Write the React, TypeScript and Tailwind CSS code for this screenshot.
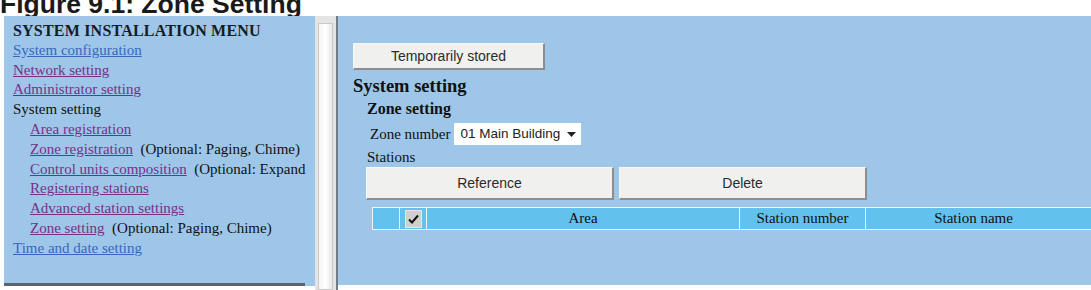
import React from "react";

const serif = "font-['Liberation_Serif','Times_New_Roman',serif]";
const sans = "font-['Liberation_Sans',Arial,sans-serif]";

function MenuLink({ children, fresh }: { children: React.ReactNode; fresh?: boolean }) {
  return (
    <a
      href="#"
      className={`underline ${fresh ? "text-[#3867c0] decoration-[#3867c0]" : "text-[#7a2f86] decoration-[#7a2f86]"}`}
    >
      {children}
    </a>
  );
}

function Btn({ label, className }: { label: string; className: string }) {
  return (
    <button
      className={`${sans} bg-[#f0f0ef] border-t border-l border-[#f7f7f7] border-r-2 border-b-2 border-r-[#8d8d8d] border-b-[#8d8d8d] text-[#2b2b2b] text-[14px] flex items-center justify-center ${className}`}
    >
      {label}
    </button>
  );
}

export default function App() {
  return (
    <div className="w-[1091px] h-[290px] bg-white overflow-hidden">
      <div className="h-[16px] flex">
        <h1 className={`${sans} font-bold text-[26.5px] leading-[26px] -mt-[9px] shrink-0 text-[#1a1a1a] whitespace-nowrap`}>
          Figure 9.1: Zone Setting
        </h1>
      </div>

      <div className="flex h-[274px] pl-[4px] items-start">
        {/* left menu frame */}
        <div className="w-[311px] h-[270px] bg-[#9ec6e9] overflow-hidden flex flex-col">
          <div className={`${serif} flex-1 text-[15px] leading-[19.8px] text-[#111] pl-[9px] pt-[5px] whitespace-nowrap`}>
            <div className="font-bold text-[16px] tracking-[0.2px] uppercase text-[#141c26]">System Installation Menu</div>
            <div><MenuLink fresh>System configuration</MenuLink></div>
            <div><MenuLink>Network setting</MenuLink></div>
            <div><MenuLink>Administrator setting</MenuLink></div>
            <div>System setting</div>
            <div className="pl-[17px] flex flex-col">
              <div><MenuLink>Area registration</MenuLink></div>
              <div><MenuLink>Zone registration</MenuLink>&nbsp;&nbsp;(Optional: Paging, Chime)</div>
              <div><MenuLink>Control units composition</MenuLink>&nbsp;&nbsp;(Optional: Expand</div>
              <div><MenuLink>Registering stations</MenuLink></div>
              <div><MenuLink>Advanced station settings</MenuLink></div>
              <div><MenuLink>Zone setting</MenuLink>&nbsp;&nbsp;(Optional: Paging, Chime)</div>
            </div>
            <div><MenuLink fresh>Time and date setting</MenuLink></div>
          </div>
          <div className="h-[3px] w-[301px] bg-[#5b646c]" />
        </div>

        {/* scrollbar */}
        <div className="w-[21px] h-[274px] bg-[#e4e4e4] flex justify-center">
          <div className="w-[15px] mt-[7px] h-[267px] bg-gradient-to-r from-[#f4f4f4] via-[#ffffff] to-[#e9e9e9] border border-[#c9c9c9]" />
        </div>
        <div className="w-[2px] h-[274px] bg-[#6f7c88]" />

        {/* right content frame */}
        <div className={`flex-1 h-[269px] bg-[#9ec6e9] pl-[15px] ${serif} text-[#111]`}>
          <Btn label="Temporarily stored" className="mt-[27px] w-[192px] h-[27px]" />
          <div className="font-bold text-[18.5px] leading-[20px] mt-[6px]">System setting</div>
          <div className="font-bold text-[16px] leading-[20px] mt-[3px] pl-[14px]">Zone setting</div>
          <div className="flex items-center gap-[4px] mt-[4px] pl-[17px] h-[22px]">
            <span className="text-[15px]">Zone number</span>
            <div className={`${sans} bg-white w-[127px] h-[22px] flex items-center justify-between pl-[6px] pr-[5px] text-[13.5px] text-[#222]`}>
              <span>01 Main Building</span>
              <svg width="9" height="5" viewBox="0 0 9 5">
                <path d="M0 0 H9 L4.5 5 Z" fill="#222" />
              </svg>
            </div>
          </div>
          <div className="text-[15px] leading-[19px] mt-[3px] pl-[14px]">Stations</div>
          <div className="flex gap-[5px] pl-[13px]">
            <Btn label="Reference" className="w-[248px] h-[33px]" />
            <Btn label="Delete" className="w-[248px] h-[33px]" />
          </div>
          <div className="ml-[19px] mt-[7px] flex h-[23px] border-y border-l border-[#eef6fb] bg-[#eef6fb] gap-[1px] text-[15px]">
            <div className="w-[26px] bg-[#62c2ed]" />
            <div className="w-[26px] bg-[#62c2ed] flex items-center justify-center">
              <div className="w-[17px] h-[18px] bg-[#cfcfcf] border border-[#e6e6e6] flex items-center justify-center">
                <svg width="11" height="10" viewBox="0 0 11 10">
                  <path d="M1 5.5 L4 8.5 L10 1.5" fill="none" stroke="#111" strokeWidth="2" />
                </svg>
              </div>
            </div>
            <div className="w-[312px] bg-[#62c2ed] flex items-center justify-center">Area</div>
            <div className="w-[125px] bg-[#62c2ed] flex items-center justify-center">Station number</div>
            <div className="flex-1 bg-[#62c2ed] flex items-center justify-center pr-[10px]">Station name</div>
          </div>
        </div>
      </div>
    </div>
  );
}
